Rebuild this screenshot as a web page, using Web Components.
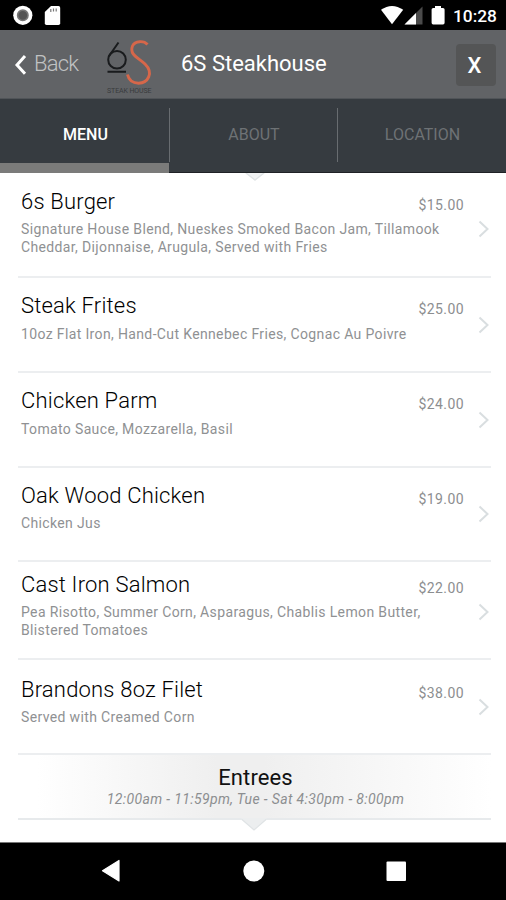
<!DOCTYPE html>
<html lang="en">
<head>
<meta charset="utf-8">
<title>6S Steakhouse</title>
<style>
html,body{margin:0;height:100%;background:#fff}
body{font-family:Roboto,"Liberation Sans",sans-serif;width:506px;height:900px;overflow:hidden}
</style>
</head>
<body>
<phone-app></phone-app>
<script>
const define = (name, html) => {
  const template = document.createElement('template');
  template.innerHTML = html;
  customElements.define(name, class extends HTMLElement {
    connectedCallback() {
      if (this.shadowRoot) return;
      this.attachShadow({mode: 'open'}).append(template.content.cloneNode(true));
    }
  });
};

define('status-bar', `
<style>
:host{display:flex;height:30px;background:#000;color:#fff;align-items:center;box-sizing:border-box;padding:0 8px 0 12px}
svg{display:block}.gap{flex:1}
.time{font-size:17.300px;font-weight:500;line-height:30px;margin-left:7px;padding-top:2px;width:45px;white-space:nowrap}
</style>
<svg width="50" height="30" viewBox="12 0 50 30"><circle cx="22.8" cy="15.3" r="9.6" fill="#fff"/><circle cx="22.8" cy="15.3" r="5.2" fill="#555" stroke="#777" stroke-width="1.6"/><path d="M51 6h7.5q1.700 0 1.700 1.700v15.600q0 1.700-1.700 1.700H46.500q-1.700 0-1.700-1.700V12z" fill="#fff"/><path d="M50.800 9v3M53.500 8.500v3M56.200 8.500v3" stroke="#777" stroke-width="1.200"/></svg>
<span class="gap"></span>
<svg width="66" height="30" viewBox="380 0 66 30"><path d="M381 9.800q11-7.800 22.200 0L392 24.200z" fill="#fff"/><path d="M422.500 6.500V24.500H404.500z" fill="#4a4a4a"/><path d="M416 13V24.500H404.500z" fill="#fff"/><path d="M435 6h6v2h2q1.600 0 1.600 1.600v13.200q0 1.700-1.600 1.700h-9.800q-1.600 0-1.600-1.700V9.600q0-1.600 1.600-1.600h1.800z" fill="#fff"/></svg>
<span class="time">10:28</span>`);

define('app-header', `
<style>
:host{display:flex;height:69px;box-sizing:border-box;background:#616366;align-items:center;padding:0 10px 0 14px;border-bottom:1px solid #505458}
svg{display:block;flex:none}
.back{font-size:22px;font-weight:300;color:#c0c2c3;width:46px;margin-left:6px;line-height:30px;margin-top:-1px;letter-spacing:-.8px}
.logo{margin-left:24px}
h1{font-size:22px;font-weight:400;color:#fff;margin:-1px 0 0 25px;flex:1;line-height:30px}
button{width:40px;height:42px;border:0;border-radius:4px;background:#545556;color:#fff;font:500 22px/42px Roboto,sans-serif;padding:1px 3px 0 0;margin-top:2px}
</style>
<svg width="14" height="24" viewBox="0 0 14 24"><path d="M11 4L3 13l8 8.800" fill="none" stroke="#fff" stroke-width="3"/></svg>
<span class="back">Back</span>
<svg class="logo" width="52" height="60" viewBox="104 34 52 60"><g fill="none"><circle cx="117" cy="59.800" r="8.800" stroke="#191b1d" stroke-width="2"/><path d="M118.500 42.500L109 56M107.500 71.800H126" stroke="#191b1d" stroke-width="2"/><path d="M147.500 44.500C144 40.500 135 40.500 132.500 46C129 55 139 58 145 64C154 73 148 83 138.500 83.200C132 83 128.500 79 127.500 74.500" stroke="#d6674a" stroke-width="2.900"/></g><text x="107" y="92.500" textLength="44.500" font-family="Roboto,sans-serif" font-size="7" fill="#393b3d">STEAK HOUSE</text></svg>
<h1>6S Steakhouse</h1>
<button>X</button>`);

define('tab-bar', `
<style>
:host{display:grid;grid-template-columns:169px 168px 169px;height:74px;background:#363b40;box-sizing:border-box;border-bottom:1px solid #1f2226}
</style><slot></slot>`);

define('tab-item', `
<style>
:host{display:block;height:73px;box-sizing:border-box;color:#6e7275;font-size:16px;text-align:center;line-height:71px;padding-left:2px;
background:linear-gradient(#686c70,#686c70) 0 9px/1px 54px no-repeat}
:host([first]){background:none}
:host([active]){color:#fff;font-weight:500;border-bottom:10px solid #7b7b7a;height:74px}
span{display:inline-block}
</style><span><slot></slot></span>`);

define('menu-item', `
<style>
:host{display:flex;height:var(--h,95px);box-sizing:border-box;border-bottom:2px solid #eceef0;margin:0 15px 0 18px;padding-left:3px;align-items:center}
.body{flex:1;padding-bottom:var(--lift,13.500px)}
.head{display:flex;justify-content:space-between;align-items:baseline;padding-right:30px;line-height:28px}
.title{font-size:22px;font-weight:300;color:#000;letter-spacing:.19px}
.price{font-size:14px;color:#8c8e90;letter-spacing:.4px;position:relative;top:1px}
.desc{font-size:14px;line-height:17.500px;color:#8f9193;letter-spacing:.36px;white-space:pre;margin-top:3.500px}
svg{display:block;flex:none;margin:var(--arrow,0) 1px 0 -16px}
.wrap{display:flex;align-items:center;flex:1}
</style>
<div class="wrap"><div class="body"><div class="head"><span class="title"><slot name="title"></slot></span><span class="price"><slot name="price"></slot></span></div><div class="desc"><slot></slot></div></div>
<svg width="12" height="18" viewBox="0 0 12 18"><path d="M1.500 1.500L9.500 9L1.500 16.500" fill="none" stroke="#d9dee0" stroke-width="2"/></svg></div>`);

define('section-heading', `
<style>
:host{display:block;position:relative;height:65px;box-sizing:border-box;margin:0 15px 0 18px;border-bottom:2px solid #e7eaec;text-align:center;
background:linear-gradient(90deg,#fff 4%,#efefef 42%,#efefef 52%,#fff)}
.name{font-size:22px;color:#111;line-height:28px;padding:9px 0 0 2px;letter-spacing:.1px}
.time{font-size:14px;font-style:italic;color:#8c8e90;line-height:17px;letter-spacing:.37px;margin-top:-1px;padding-left:2px}
svg{position:absolute;left:223px;top:63px}
</style>
<div class="name"><slot name="name"></slot></div><div class="time"><slot></slot></div>
<svg width="26" height="14" viewBox="0 0 26 14"><path d="M0 0H26L13 12z" fill="#eceeef"/><path d="M1 1.500L13 12L25 1.500" fill="none" stroke="#dfe3e5" stroke-width="1.300"/></svg>`);

define('nav-bar', `
<style>:host{display:block;height:58px;background:#000;border-top:1px solid #777;box-sizing:border-box}svg{display:block}</style>
<svg width="506" height="57" viewBox="0 843 506 57" fill="#fff"><path d="M119 860.500V881L102.500 870.800z" stroke="#fff" stroke-width="1.200" stroke-linejoin="round"/><circle cx="253.800" cy="871" r="10.500"/><rect x="386.500" y="861.500" width="19.500" height="19.500" rx="1"/></svg>`);

define('phone-app', `
<style>
:host{display:flex;flex-direction:column;height:900px;width:506px;background:#fff}
main{display:block;flex:1;position:relative;background:#fff}
.notch{position:absolute;left:242px;top:0}
</style>
<status-bar></status-bar>
<app-header></app-header>
<tab-bar><tab-item first active>MENU</tab-item><tab-item>ABOUT</tab-item><tab-item>LOCATION</tab-item></tab-bar>
<main>
<svg class="notch" width="26" height="9" viewBox="0 0 26 9"><path d="M3 0L13 8L23 0z" fill="#f0f2f3"/><path d="M4 0L13 7L22 0" fill="none" stroke="#dfe3e5" stroke-width="1.300"/></svg>
<menu-item style="--h:105px;--arrow:8px;--lift:5.500px"><span slot="title">6s Burger</span><span slot="price">$15.00</span>Signature House Blend, Nueskes Smoked Bacon Jam, Tillamook
Cheddar, Dijonnaise, Arugula, Served with Fries</menu-item>
<menu-item><span slot="title">Steak Frites</span><span slot="price">$25.00</span>10oz Flat Iron, Hand-Cut Kennebec Fries, Cognac Au Poivre</menu-item>
<menu-item><span slot="title">Chicken Parm</span><span slot="price">$24.00</span>Tomato Sauce, Mozzarella, Basil</menu-item>
<menu-item style="--h:94px"><span slot="title">Oak Wood Chicken</span><span slot="price">$19.00</span>Chicken Jus</menu-item>
<menu-item style="--h:98px;--lift:10px;--arrow:3px"><span slot="title">Cast Iron Salmon</span><span slot="price">$22.00</span>Pea Risotto, Summer Corn, Asparagus, Chablis Lemon Butter,
Blistered Tomatoes</menu-item>
<menu-item style="--lift:11px"><span slot="title">Brandons 8oz Filet</span><span slot="price">$38.00</span>Served with Creamed Corn</menu-item>
<section-heading><span slot="name">Entrees</span>12:00am - 11:59pm, Tue - Sat 4:30pm - 8:00pm</section-heading>
</main>
<nav-bar></nav-bar>`);
</script>
</body>
</html>
